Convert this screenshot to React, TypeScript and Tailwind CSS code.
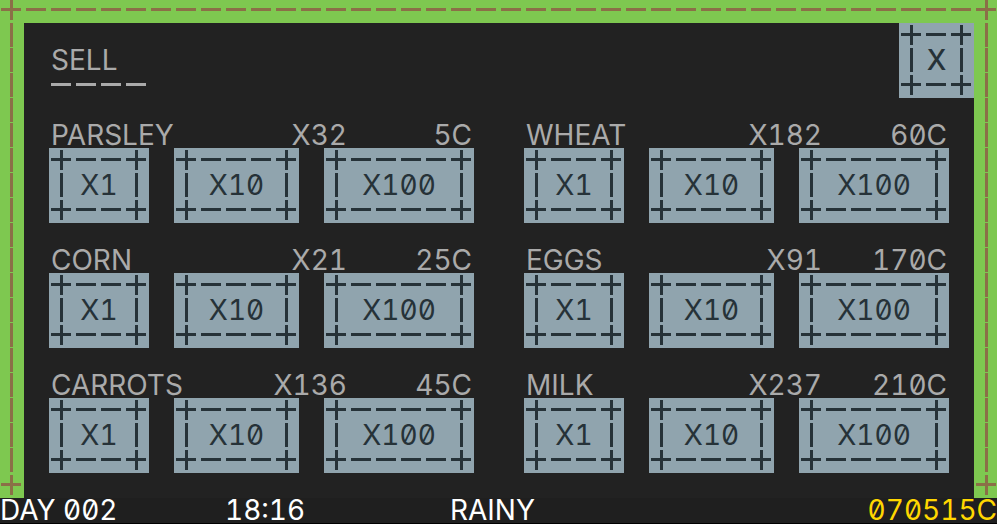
import React from "react";

type Item = { name: string; count: number; price: number };

const items: Item[] = [
  { name: "PARSLEY", count: 32, price: 5 },
  { name: "WHEAT", count: 182, price: 60 },
  { name: "CORN", count: 21, price: 25 },
  { name: "EGGS", count: 91, price: 170 },
  { name: "CARROTS", count: 136, price: 45 },
  { name: "MILK", count: 237, price: 210 },
];

const amounts = [1, 10, 100];

// Frame tiles: every tile is a 25px cell drawn in the current text colour.
function Corner() {
  return (
    <svg className="block size-[25px] shrink-0" viewBox="0 0 25 25" fill="currentColor" aria-hidden="true">
      <rect x="2" y="10" width="20" height="3" />
      <rect x="11" y="2" width="3" height="20" />
    </svg>
  );
}

function Dashes() {
  return (
    <span
      aria-hidden="true"
      className="block h-[25px] bg-[linear-gradient(90deg,transparent_2px,currentColor_2px,currentColor_22px,transparent_22px)] bg-[length:25px_3px] bg-[position:0_10px] bg-repeat-x"
    />
  );
}

function Pipes() {
  return (
    <span
      aria-hidden="true"
      className="block min-h-[25px] w-[25px] grow bg-[linear-gradient(180deg,currentColor_24px,transparent_24px)] bg-[length:3px_25px] bg-[position:11px_0] bg-repeat-y"
    />
  );
}

function FramedButton({
  children,
  label,
  className = "",
}: {
  children: React.ReactNode;
  label: string;
  className?: string;
}) {
  return (
    <button
      type="button"
      aria-label={label}
      className={`grid cursor-pointer grid-cols-[25px_1fr_25px] bg-[#90a4ae] text-[#263238] hover:bg-[#a3b5be] ${className}`}
    >
      <Corner />
      <Dashes />
      <Corner />
      <Pipes />
      <span className="whitespace-nowrap text-center">{children}</span>
      <Pipes />
      <Corner />
      <Dashes />
      <Corner />
    </button>
  );
}

function Side() {
  return (
    <div className="flex flex-col bg-[#7ec850] text-[#8b6f47]">
      <Corner />
      <Pipes />
      <Corner />
    </div>
  );
}

function ItemCard({ item }: { item: Item }) {
  return (
    <section>
      <div className="grid grid-cols-[1fr_auto_125px] whitespace-nowrap px-0.5">
        <h2>{item.name}</h2>
        <span>X{item.count}</span>
        <span className="text-right">{item.price}C</span>
      </div>
      <div className="grid grid-cols-[4fr_5fr_6fr] gap-[25px]">
        {amounts.map((n) => (
          <FramedButton key={n} label={`Sell ${n} ${item.name}`}>
            X{n}
          </FramedButton>
        ))}
      </div>
    </section>
  );
}

export default function App() {
  return (
    <div className="min-h-screen overflow-x-clip bg-black font-[Inter,sans-serif] text-[28px] leading-[25px] text-[#aaaaaa] slashed-zero tabular-nums">
      <div className="-mt-0.5 -mr-0.5 -ml-px grid grid-cols-[25px_1fr_25px]">
        <Side />
        <main className="bg-[#222222]">
          <div className="bg-[#7ec850] text-[#8b6f47]">
            <Dashes />
          </div>
          <header className="flex items-start justify-between">
            <div className="pt-[25px] pl-[25px]">
              <h1 className="px-0.5">SELL</h1>
              <div className="w-[100px]">
                <Dashes />
              </div>
            </div>
            <FramedButton label="Close" className="w-[75px] font-medium">
              X
            </FramedButton>
          </header>
          <div className="grid grid-cols-2 gap-x-[50px] gap-y-[25px] p-[25px]">
            {items.map((item) => (
              <ItemCard key={item.name} item={item} />
            ))}
          </div>
        </main>
        <Side />
      </div>
      <footer className="grid grid-cols-[225px_225px_1fr_auto] whitespace-nowrap bg-[#1f1f1f] text-white">
        <span>DAY 002</span>
        <span>18:16</span>
        <span>RAINY</span>
        <span className="text-[#ffd700]">070515C</span>
      </footer>
    </div>
  );
}
